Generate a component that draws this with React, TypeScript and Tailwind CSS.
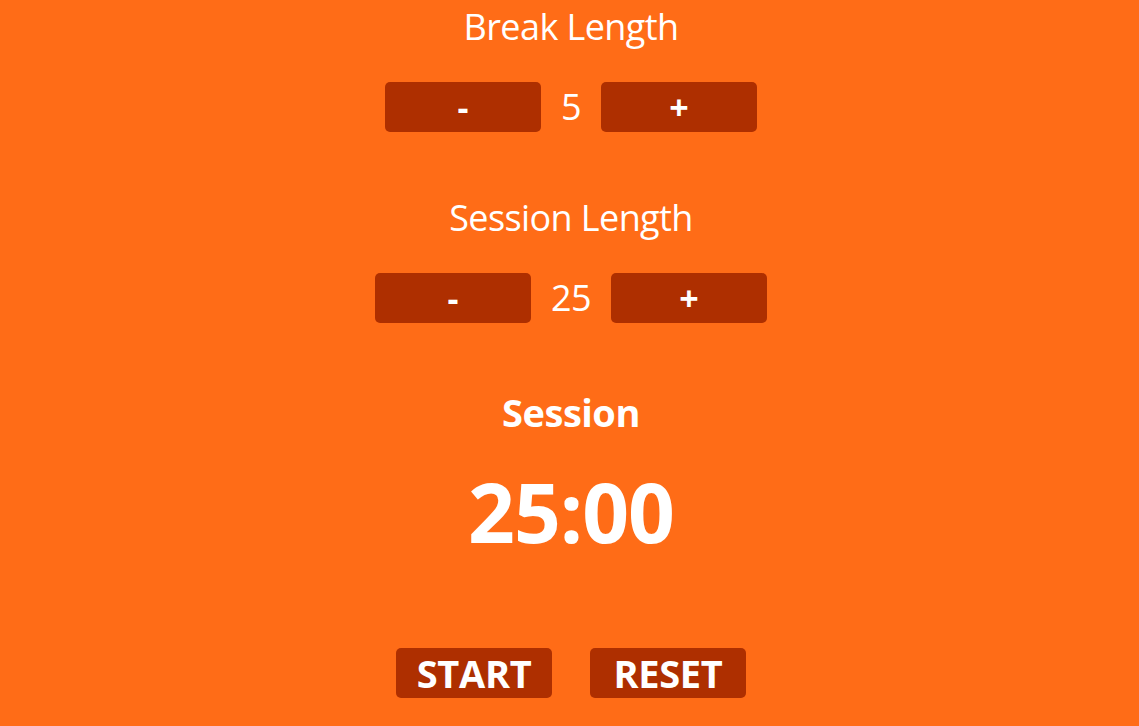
import React from 'react';

const font = { fontFamily: '"Open Sans", "Noto Sans", sans-serif' };

const Btn: React.FC<{ label: string; big?: boolean }> = ({ label, big }) => (
  <button
    className={`w-[156px] h-[50px] rounded-[5px] bg-[#ae2f00] text-white font-bold flex items-center justify-center ${
      big ? 'text-[38px] tracking-[-0.3px]' : 'text-[34px]'
    }`}
  >
    {label}
  </button>
);

const Control: React.FC<{ title: string; value: number }> = ({ title, value }) => (
  <div className="flex flex-col items-center">
    <div className="h-[44px] leading-[44px] text-[36px] tracking-[-0.6px] text-white">{title}</div>
    <div className="mt-[33px] flex items-center gap-5">
      <Btn label="-" />
      <span className="text-[36px] text-white leading-[50px] tracking-[-0.5px]">{value}</span>
      <Btn label="+" />
    </div>
  </div>
);

export default function App() {
  return (
    <div className="min-h-screen w-full bg-[#ff6c17] flex flex-col items-center pt-[5px] pl-[3px]" style={font}>
      <Control title="Break Length" value={5} />
      <div className="mt-[64px]">
        <Control title="Session Length" value={25} />
      </div>
      <div className="mt-[65px] h-[48px] leading-[48px] text-[38px] font-bold text-white tracking-[-0.5px]">Session</div>
      <div className="mt-[32px] h-[86px] leading-[86px] text-[82px] font-bold text-white tracking-[-1px]">25:00</div>
      <div className="mt-[94px] flex gap-[38px]">
        <Btn label="START" big />
        <Btn label="RESET" big />
      </div>
    </div>
  );
}
